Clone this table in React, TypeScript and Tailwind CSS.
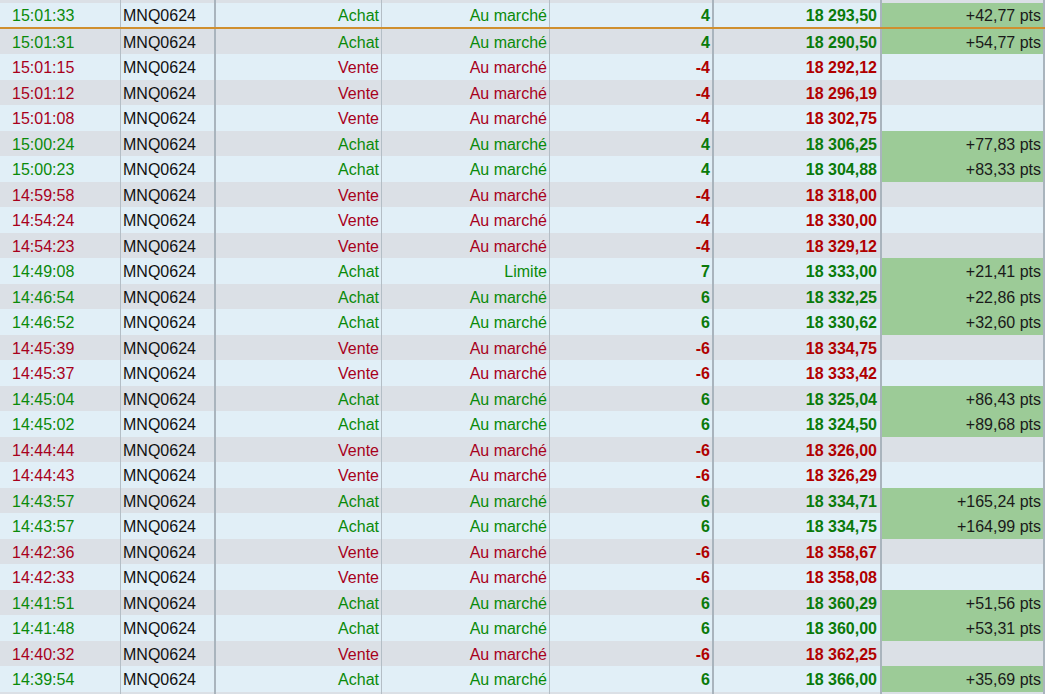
import * as React from "react";

type Trade = {
    time: string;
    side: "Achat" | "Vente";
    type: string;
    qty: string;
    price: string;
    pnl?: string;
};

const trades: Trade[] = [
    { time: "15:01:33", side: "Achat", type: "Au marché", qty: "4", price: "18 293,50", pnl: "+42,77 pts" },
    { time: "15:01:31", side: "Achat", type: "Au marché", qty: "4", price: "18 290,50", pnl: "+54,77 pts" },
    { time: "15:01:15", side: "Vente", type: "Au marché", qty: "-4", price: "18 292,12" },
    { time: "15:01:12", side: "Vente", type: "Au marché", qty: "-4", price: "18 296,19" },
    { time: "15:01:08", side: "Vente", type: "Au marché", qty: "-4", price: "18 302,75" },
    { time: "15:00:24", side: "Achat", type: "Au marché", qty: "4", price: "18 306,25", pnl: "+77,83 pts" },
    { time: "15:00:23", side: "Achat", type: "Au marché", qty: "4", price: "18 304,88", pnl: "+83,33 pts" },
    { time: "14:59:58", side: "Vente", type: "Au marché", qty: "-4", price: "18 318,00" },
    { time: "14:54:24", side: "Vente", type: "Au marché", qty: "-4", price: "18 330,00" },
    { time: "14:54:23", side: "Vente", type: "Au marché", qty: "-4", price: "18 329,12" },
    { time: "14:49:08", side: "Achat", type: "Limite", qty: "7", price: "18 333,00", pnl: "+21,41 pts" },
    { time: "14:46:54", side: "Achat", type: "Au marché", qty: "6", price: "18 332,25", pnl: "+22,86 pts" },
    { time: "14:46:52", side: "Achat", type: "Au marché", qty: "6", price: "18 330,62", pnl: "+32,60 pts" },
    { time: "14:45:39", side: "Vente", type: "Au marché", qty: "-6", price: "18 334,75" },
    { time: "14:45:37", side: "Vente", type: "Au marché", qty: "-6", price: "18 333,42" },
    { time: "14:45:04", side: "Achat", type: "Au marché", qty: "6", price: "18 325,04", pnl: "+86,43 pts" },
    { time: "14:45:02", side: "Achat", type: "Au marché", qty: "6", price: "18 324,50", pnl: "+89,68 pts" },
    { time: "14:44:44", side: "Vente", type: "Au marché", qty: "-6", price: "18 326,00" },
    { time: "14:44:43", side: "Vente", type: "Au marché", qty: "-6", price: "18 326,29" },
    { time: "14:43:57", side: "Achat", type: "Au marché", qty: "6", price: "18 334,71", pnl: "+165,24 pts" },
    { time: "14:43:57", side: "Achat", type: "Au marché", qty: "6", price: "18 334,75", pnl: "+164,99 pts" },
    { time: "14:42:36", side: "Vente", type: "Au marché", qty: "-6", price: "18 358,67" },
    { time: "14:42:33", side: "Vente", type: "Au marché", qty: "-6", price: "18 358,08" },
    { time: "14:41:51", side: "Achat", type: "Au marché", qty: "6", price: "18 360,29", pnl: "+51,56 pts" },
    { time: "14:41:48", side: "Achat", type: "Au marché", qty: "6", price: "18 360,00", pnl: "+53,31 pts" },
    { time: "14:40:32", side: "Vente", type: "Au marché", qty: "-6", price: "18 362,25" },
    { time: "14:39:54", side: "Achat", type: "Au marché", qty: "6", price: "18 366,00", pnl: "+35,69 pts" },
];

const cols = "grid grid-cols-[121px_95px_166px_168px_164px_168px_163px]";

function Row({ trade, light, last }: { trade?: Trade; light: boolean; last?: boolean }) {
    const buy = trade?.side === "Achat";
    const text = buy ? "text-[#0a8a0a]" : "text-[#a8001c]";
    const bold = buy ? "text-[#0a7a0a]" : "text-[#b00000]";
    return (
        <div
            className={`${cols} h-[25.5px] ${light ? "bg-[#e1eff7]" : "bg-[#dbe0e6]"} ${
                last ? "border-b-2 border-[#cf8f2f]" : ""
            }`}
        >
            <div className={`flex items-center pt-[3px] pl-[12px] border-r border-[#b4bec6] ${text}`}>{trade?.time}</div>
            <div className="flex items-center pt-[3px] pl-[2px] border-r-2 border-[#a9b4bd] text-[#111]">
                {trade && "MNQ0624"}
            </div>
            <div className={`flex items-center justify-end pt-[3px] pr-[2px] border-r border-[#b4bec6] ${text}`}>
                {trade?.side}
            </div>
            <div className={`flex items-center justify-end pt-[3px] pr-[2px] border-r border-[#b4bec6] ${text}`}>
                {trade?.type}
            </div>
            <div className={`flex items-center justify-end pt-[3px] pr-[2px] border-r-2 border-[#a9b4bd] font-bold ${bold}`}>
                {trade?.qty}
            </div>
            <div className={`flex items-center justify-end pt-[3px] pr-[3px] border-r-2 border-[#a9b4bd] font-bold ${bold}`}>
                {trade?.price}
            </div>
            <div
                className={`flex items-center justify-end pt-[3px] pr-[2px] border-r-2 border-[#a9b4bd] text-[#1a1a1a] ${
                    trade?.pnl ? "bg-[#9ccb97]" : ""
                }`}
            >
                {trade?.pnl}
            </div>
        </div>
    );
}

export default function App() {
    return (
        <div className="w-[1045px] h-[694px] overflow-hidden bg-[#e1eff7] font-['Liberation_Sans',Arial,sans-serif] text-[16px] leading-none">
            {/* partial row above */}
            <div className="h-[3px] overflow-hidden">
                <Row light={false} />
            </div>
            {trades.map((t, i) => (
                <Row key={i} trade={t} light={i % 2 === 0} last={i === 0} />
            ))}
            {/* partial row below */}
            <Row light={false} />
        </div>
    );
}
